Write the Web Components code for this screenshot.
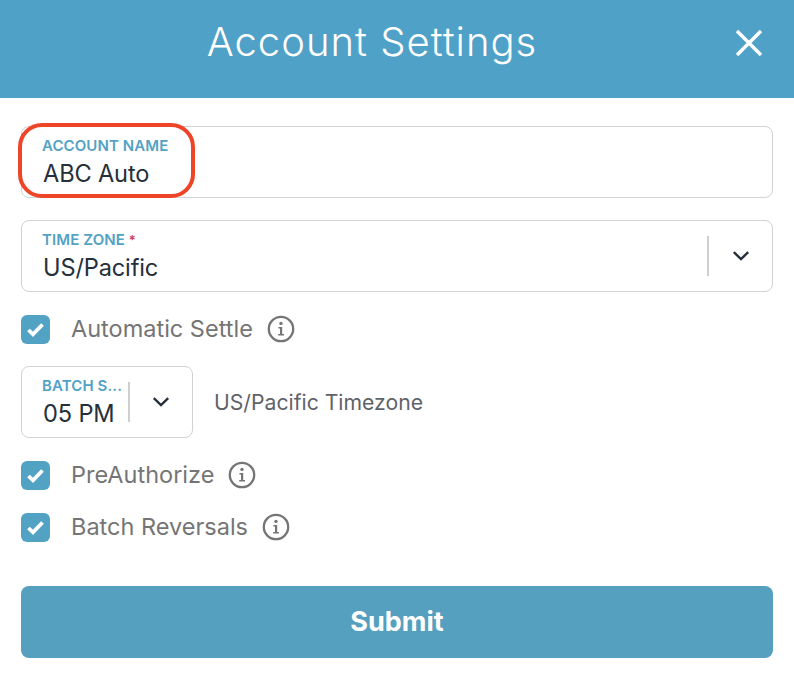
<!DOCTYPE html>
<html>
<head>
<meta charset="utf-8">
<title>Account Settings</title>
<style>
  html, body { margin: 0; background: #fff; }
  body { font-family: Inter, Lato, sans-serif; font-variant-ligatures: none; width: 794px; height: 698px; overflow: hidden; }
</style>
</head>
<body>
<settings-dialog title="Account Settings">
  <text-field label="ACCOUNT NAME" value="ABC Auto" highlight></text-field>
  <select-field label="TIME ZONE" value="US/Pacific" required></select-field>
  <check-row label="Automatic Settle"></check-row>
  <batch-row label="BATCH S..." value="05 PM" note="US/Pacific Timezone"></batch-row>
  <check-row label="PreAuthorize"></check-row>
  <check-row label="Batch Reversals"></check-row>
  <submit-button>Submit</submit-button>
</settings-dialog>

<script>
'use strict'
const CHEVRON = `<svg width="18" height="12" viewBox="0 0 18 12" fill="none"><path d="M1.8 2.2L9 9L16.2 2.2" stroke="#25303b" stroke-width="2.4"/></svg>`
const INFO = `<svg width="28" height="28" viewBox="0 0 28 28" fill="none">
  <circle cx="14" cy="14" r="12.2" stroke="#757575" stroke-width="2.3"/>
  <circle cx="14" cy="8.4" r="1.7" fill="#757575"/>
  <path d="M11.4 11.9H15.2V19H17V20.6H11.2V19H13V13.5H11.4Z" fill="#757575"/>
</svg>`

const FIELD_CSS = `
  .box { box-sizing: border-box; height: 72px; border: 1px solid #d2d2d2; border-radius: 8px; background: #fff; display: flex; align-items: center; }
  .text { flex: 1; min-width: 0; padding-left: 20px; padding-top: 2px; }
  .label { font-size: 15px; line-height: 18px; font-weight: 600; letter-spacing: 0.1px; color: #52a2c4; white-space: nowrap; }
  .label b { color: #d23a4a; font-size: 13px; font-weight: 600; }
  .value { font-size: 23.6px; line-height: 30px; margin-left: 1px; margin-top: 4px; letter-spacing: -0.15px; color: #25303b; white-space: nowrap; }
  .arrow { display: flex; align-items: center; justify-content: center; border-left: 2px solid #cfcfcf; height: 40px; }
`

customElements.define('settings-dialog', class extends HTMLElement {
  constructor () {
    super()
    this.attachShadow({ mode: 'open' }).innerHTML = `
      <style>
        :host { display: block; }
        header { height: 98px; background: #4fa1c7; display: flex; align-items: center; justify-content: center; padding-right: 50px; box-sizing: border-box; position: relative; }
        h1 { margin: 0 0 15px; font-size: 40px; line-height: 54px; font-weight: 350; letter-spacing: 1px; color: #fff; white-space: nowrap; }
        .close { position: absolute; left: 735px; top: 29px; display: block; }
        main { padding: 28px 21px 0; display: flex; flex-direction: column; }
      </style>
      <header>
        <h1>${this.getAttribute('title')}</h1>
        <svg class="close" width="28" height="28" viewBox="0 0 28 28" fill="none"><path d="M2 2L26 26M26 2L2 26" stroke="#fff" stroke-width="3.4"/></svg>
      </header>
      <main><slot></slot></main>`
  }
})

customElements.define('text-field', class extends HTMLElement {
  constructor () {
    super()
    this.attachShadow({ mode: 'open' }).innerHTML = `
      <style>
        :host { display: block; position: relative; }
        ${FIELD_CSS}
        .mark { position: absolute; left: -3px; top: -3px; width: 177px; height: 75px; box-sizing: border-box; border: 4.5px solid #ee4529; border-radius: 24px; }
      </style>
      <div class="box"><div class="text">
        <div class="label">${this.getAttribute('label')}</div>
        <div class="value">${this.getAttribute('value')}</div>
      </div></div>
      ${this.hasAttribute('highlight') ? '<div class="mark"></div>' : ''}`
  }
})

customElements.define('select-field', class extends HTMLElement {
  constructor () {
    super()
    this.attachShadow({ mode: 'open' }).innerHTML = `
      <style>
        :host { display: block; margin-top: 22px; }
        ${FIELD_CSS}
        .arrow { width: 63px; }
      </style>
      <div class="box">
        <div class="text">
          <div class="label">${this.getAttribute('label')}${this.hasAttribute('required') ? ' <b>*</b>' : ''}</div>
          <div class="value">${this.getAttribute('value')}</div>
        </div>
        <div class="arrow">${CHEVRON}</div>
      </div>`
  }
})

customElements.define('check-row', class extends HTMLElement {
  constructor () {
    super()
    this.attachShadow({ mode: 'open' }).innerHTML = `
      <style>
        :host { display: flex; align-items: center; height: 29px; margin-top: 23px; }
        .check { width: 29px; height: 29px; border-radius: 6px; background: #52a2c4; display: flex; align-items: center; justify-content: center; }
        .label { margin-left: 21px; margin-bottom: 2px; font-size: 23.5px; color: #757575; white-space: nowrap; }
        .info { margin-left: 14px; margin-bottom: 2px; display: flex; }
      </style>
      <div class="check"><svg width="19" height="15" viewBox="0 0 19 15" fill="none"><path d="M2.5 8L7 12.3L16.5 2.5" stroke="#fff" stroke-width="3.8"/></svg></div>
      <div class="label">${this.getAttribute('label')}</div>
      <div class="info">${INFO}</div>`
  }
})

customElements.define('batch-row', class extends HTMLElement {
  constructor () {
    super()
    this.attachShadow({ mode: 'open' }).innerHTML = `
      <style>
        :host { display: flex; align-items: center; margin-top: 22px; }
        ${FIELD_CSS}
        .box { width: 172px; flex: none; }
        .arrow { width: 62px; flex: none; }
        .note { margin-left: 21px; font-size: 21.2px; color: #5f6368; white-space: nowrap; }
      </style>
      <div class="box">
        <div class="text">
          <div class="label">${this.getAttribute('label')}</div>
          <div class="value">${this.getAttribute('value')}</div>
        </div>
        <div class="arrow">${CHEVRON}</div>
      </div>
      <div class="note">${this.getAttribute('note')}</div>`
  }
})

customElements.define('submit-button', class extends HTMLElement {
  constructor () {
    super()
    this.attachShadow({ mode: 'open' }).innerHTML = `
      <style>
        :host { display: block; margin-top: 44px; }
        button { display: block; width: 100%; height: 72px; border: 0; border-radius: 8px; background: #559fbf; color: #fff; font: 700 27px Inter, sans-serif; padding: 0 0 2px; }
      </style>
      <button><slot></slot></button>`
  }
})
</script>
</body>
</html>
